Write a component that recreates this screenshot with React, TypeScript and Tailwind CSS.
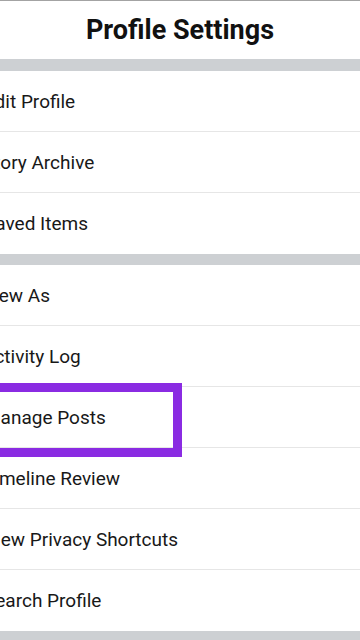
const groupOne = [
  { label: "Edit Profile", shift: "-ml-[16px]" },
  { label: "Story Archive", shift: "-ml-[17px]" },
  { label: "Saved Items", shift: "-ml-[16px]" },
];

const groupTwo = [
  { label: "View As", shift: "-ml-[18px]" },
  { label: "Activity Log", shift: "-ml-[18px]" },
  { label: "Manage Posts", shift: "-ml-[16px]" },
  { label: "Timeline Review", shift: "-ml-[17px]" },
  { label: "View Privacy Shortcuts", shift: "-ml-[16px]" },
  { label: "Search Profile", shift: "-ml-[16px]" },
];

const Row = ({ label, shift, last }: { label: string; shift: string; last: boolean }) => {
  return (
    <div
      className={`h-[61px] flex items-center bg-white ${last ? "" : "border-b border-[#e6e6e6]"}`}
    >
      <span className={`${shift} pt-[2px] whitespace-nowrap text-[19px] text-[#181818]`}>{label}</span>
    </div>
  );
};

const App = () => {
  return (
    <div
      className="relative w-[360px] h-[640px] overflow-hidden bg-white"
      style={{ fontFamily: "Roboto, 'Noto Sans', sans-serif" }}
    >
      <div className="h-[59px] border-t border-[#a3a3a3] flex items-center justify-center">
        <h1 className="text-[27px] font-bold text-[#111] leading-none">Profile Settings</h1>
      </div>
      <div className="h-[12px] bg-[#cdd0d3]" />

      {groupOne.map((item, i) => (
        <Row key={item.label} label={item.label} shift={item.shift} last={i === groupOne.length - 1} />
      ))}

      <div className="h-[11px] bg-[#cdd0d3]" />

      {groupTwo.map((item, i) => (
        <Row key={item.label} label={item.label} shift={item.shift} last={i === groupTwo.length - 1} />
      ))}

      <div className="h-[9px] bg-[#cdd0d3]" />

      {/* highlight box over "Manage Posts" */}
      <div className="absolute left-[-20px] top-[383px] w-[202px] h-[74px] border-[9px] border-[#8a2be2]" />
    </div>
  );
};

export default App;
